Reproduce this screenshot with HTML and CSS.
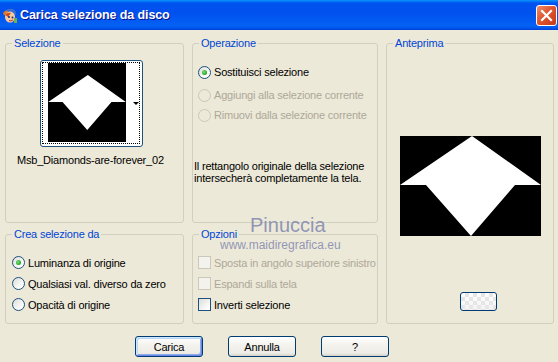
FILE: index.html
```html
<!DOCTYPE html>
<html lang="it">
<head>
    <meta charset="UTF-8">
    <title>Carica selezione da disco</title>
    <link rel="stylesheet" href="styles.css">
</head>
<body>
    <div class="window">
        <div class="titlebar">
            <svg class="app-icon" width="16" height="16" viewBox="0 0 16 16">
                <path d="M3 3 Q6 0 11 1 Q15 3 14 7 L12 6 Q10 3 6 4 Z" fill="#3a6fd0"/>
                <path d="M1 6 Q2 2 6 3 L4 8 Z" fill="#e07a1e"/>
                <ellipse cx="8" cy="9" rx="5" ry="5.5" fill="#f6c9a0"/>
                <path d="M3 7 Q5 4 9 5 L6 9 Z" fill="#d24c1a"/>
                <circle cx="7" cy="9" r="1" fill="#1b2a6b"/>
                <circle cx="10.5" cy="9.5" r="1" fill="#1b2a6b"/>
                <path d="M7 12.5 Q9 13.5 11 12" stroke="#b33" stroke-width="1" fill="none"/>
                <rect x="12" y="10" width="3" height="5" fill="#6ab04c"/>
            </svg>
            <span class="title">Carica selezione da disco</span>
            <button class="close">
                <svg width="13" height="13" viewBox="0 0 13 13">
                    <path d="M2 2 L11 11 M11 2 L2 11" stroke="#fff" stroke-width="2.2" stroke-linecap="square"/>
                </svg>
            </button>
        </div>

        <div class="dialog">
            <div class="groups">
                <fieldset class="group sel">
                    <legend>Selezione</legend>
                    <div class="thumb">
                        <div class="thumb-focus">
                            <div class="thumb-img">
                                <svg width="78" height="55" viewBox="0 0 141 100">
                                    <polygon points="72,0 141,49 115,49 71,100 26,49 0,49" fill="#fff"/>
                                </svg>
                            </div>
                            <span class="thumb-arrow"></span>
                        </div>
                    </div>
                    <div class="sel-name">Msb_Diamonds-are-forever_02</div>
                </fieldset>

                <fieldset class="group op">
                    <legend>Operazione</legend>
                    <div class="row first"><span class="radio checked"></span><span class="label">Sostituisci selezione</span></div>
                    <div class="row disabled"><span class="radio"></span><span class="label">Aggiungi alla selezione corrente</span></div>
                    <div class="row disabled"><span class="radio"></span><span class="label">Rimuovi dalla selezione corrente</span></div>
                    <p class="note">Il rettangolo originale della selezione intersecherà completamente la tela.</p>
                </fieldset>

                <fieldset class="group preview">
                    <legend>Anteprima</legend>
                    <div class="preview-img">
                        <svg width="141" height="100" viewBox="0 0 141 100">
                            <polygon points="72,0 141,49 115,49 71,100 26,49 0,49" fill="#fff"/>
                        </svg>
                    </div>
                    <button class="bg-btn"></button>
                </fieldset>

                <fieldset class="group crea">
                    <legend>Crea selezione da</legend>
                    <div class="list">
                        <div class="row"><span class="radio checked"></span><span class="label">Luminanza di origine</span></div>
                        <div class="row"><span class="radio"></span><span class="label">Qualsiasi val. diverso da zero</span></div>
                        <div class="row"><span class="radio"></span><span class="label">Opacità di origine</span></div>
                    </div>
                </fieldset>

                <fieldset class="group opt">
                    <legend>Opzioni</legend>
                    <div class="list">
                        <div class="row disabled"><span class="check"></span><span class="label">Sposta in angolo superiore sinistro</span></div>
                        <div class="row disabled"><span class="check"></span><span class="label">Espandi sulla tela</span></div>
                        <div class="row"><span class="check"></span><span class="label">Inverti selezione</span></div>
                    </div>
                </fieldset>
            </div>

            <div class="buttons">
                <button class="btn default">Carica</button>
                <button class="btn">Annulla</button>
                <button class="btn">?</button>
            </div>

            <div class="watermark">
                <div class="wm-name">Pinuccia</div>
                <div class="wm-site">www.maidiregrafica.eu</div>
            </div>
        </div>
    </div>
</body>
</html>
```

FILE: styles.css
```css
body {
    margin: 0;
    padding: 0;
    background-color: #ece9d8;
    font-family: "Liberation Sans", Arial, sans-serif;
    font-size: 11px;
    letter-spacing: -0.2px;
    color: #000;
}
.window {
    width: 558px;
    height: 362px;
    overflow: hidden;
}
.titlebar {
    height: 30px;
    display: flex;
    align-items: center;
    padding: 0 1px 0 2px;
    background: linear-gradient(to bottom, #0997ff 0, #0053ee 10%, #0050ee 40%, #0561f4 85%, #0058ee 93%, #003dd7 100%);
}
.app-icon {
    margin-top: 1px;
}
.title {
    margin-left: 2px;
    color: #fff;
    font-weight: bold;
    font-size: 12.5px;
    letter-spacing: -0.1px;
    text-shadow: 1px 1px #0f1089;
}
.close {
    margin-left: auto;
    width: 21px;
    height: 21px;
    padding: 0;
    border: 1px solid #fff;
    border-radius: 3px;
    background: linear-gradient(135deg, #ef8e70 0, #e0552f 45%, #c23b17 100%);
    display: flex;
    align-items: center;
    justify-content: center;
}
.dialog {
    position: relative;
    padding: 6px 4px 0 5px;
}
.groups {
    display: grid;
    grid-template-columns: 179px 186px 168px;
    grid-template-rows: 187px 97px;
    gap: 4px 8px;
}
.group {
    margin: 0;
    padding: 0;
    min-width: 0;
    border: 1px solid #d0d0bf;
    border-radius: 3px;
}
.group legend {
    margin-left: 6px;
    padding: 0 2px;
    line-height: 14px;
    color: #0046d5;
}
.sel { grid-column: 1; grid-row: 1; }
.op { grid-column: 2; grid-row: 1; }
.preview { grid-column: 3; grid-row: 1 / span 2; }
.crea { grid-column: 1; grid-row: 2; }
.opt { grid-column: 2; grid-row: 2; }

/* selezione */
.thumb {
    margin: 10px 0 0 34px;
    width: 103px;
    height: 87px;
    box-sizing: border-box;
    border: 1px solid #1c5180;
    border-radius: 3px;
    background: #fff;
}
.thumb-focus {
    margin: 1px;
    width: 98px;
    height: 82px;
    box-sizing: border-box;
    border: 1px dotted #000;
    display: flex;
    align-items: flex-start;
}
.thumb-img {
    margin-left: 5px;
    width: 78px;
    height: 79px;
    background: #000;
    display: flex;
    align-items: center;
}
.thumb-img svg {
    display: block;
}
.thumb-arrow {
    align-self: center;
    margin-left: 7px;
    width: 0;
    height: 0;
    border-left: 3px solid transparent;
    border-right: 3px solid transparent;
    border-top: 3px solid #000;
}
.sel-name {
    margin: 6px 0 0 11px;
    line-height: 14px;
}

/* righe radio / check */
.row {
    display: flex;
    align-items: center;
    height: 20px;
}
.op .row {
    padding-left: 5px;
}
.op .row.first {
    margin-top: 12px;
    margin-bottom: 3px;
}
.list {
    margin-top: 11px;
}
.list .row {
    height: 21px;
}
.crea .row {
    padding-left: 6px;
}
.opt .row {
    padding-left: 5px;
}
.label {
    margin-left: 3px;
}
.row.disabled .label {
    color: #aca899;
}
.radio {
    position: relative;
    width: 13px;
    height: 13px;
    box-sizing: border-box;
    border: 1px solid #1c5180;
    border-radius: 50%;
    background: linear-gradient(135deg, #dcdcd7 0, #fff 80%);
    flex: none;
}
.radio.checked::after {
    content: "";
    position: absolute;
    left: 3px;
    top: 3px;
    width: 5px;
    height: 5px;
    border-radius: 50%;
    background: radial-gradient(circle at 40% 40%, #7ee07a 0, #21a121 70%);
}
.row.disabled .radio {
    border-color: #cac8bb;
    background: #ece9d8;
}
.check {
    width: 13px;
    height: 13px;
    box-sizing: border-box;
    border: 1px solid #1c5180;
    background: linear-gradient(135deg, #dcdcd7 0, #fff 85%);
    flex: none;
}
.row.disabled .check {
    border-color: #cac8bb;
    background: #f3f2ec;
}
.note {
    margin: 35px 0 0 1px;
    line-height: 12px;
}

/* anteprima */
.preview-img {
    margin: 86px 0 0 13px;
    width: 141px;
    height: 100px;
    background: #000;
}
.preview-img svg {
    display: block;
}
.bg-btn {
    display: block;
    margin: 56px 0 0 73px;
    width: 37px;
    height: 19px;
    padding: 0;
    border: 1px solid #003c74;
    border-radius: 3px;
    background:
        linear-gradient(45deg, #e6e6e6 25%, transparent 25%, transparent 75%, #e6e6e6 75%),
        linear-gradient(45deg, #e6e6e6 25%, transparent 25%, transparent 75%, #e6e6e6 75%),
        linear-gradient(#fff, #f2f2f2);
    background-size: 8px 8px, 8px 8px, 100% 100%;
    background-position: 0 0, 4px 4px, 0 0;
}

/* pulsanti */
.buttons {
    display: flex;
    gap: 25px;
    margin: 12px 0 0 130px;
}
.btn {
    width: 68px;
    height: 21px;
    padding: 0;
    border: 1px solid #003c74;
    border-radius: 3px;
    background: linear-gradient(to bottom, #fff 0, #f4f3ee 40%, #ecebe6 85%, #d6d0c5 100%);
    font-family: "Liberation Sans", Arial, sans-serif;
    font-size: 11px;
    letter-spacing: -0.2px;
    color: #000;
}
.btn.default {
    box-shadow: inset 1px 1px #cee7ff, inset -1px -1px #6982ee, inset 2px 2px #bcd4f6, inset -2px -2px #89ade4;
}

/* filigrana */
.watermark {
    position: absolute;
    left: 0;
    top: 0;
    pointer-events: none;
}
.wm-name {
    position: absolute;
    left: 250px;
    top: 185px;
    font-size: 20px;
    line-height: 20px;
    letter-spacing: 0;
    color: rgba(128, 134, 175, 0.85);
    white-space: nowrap;
}
.wm-site {
    position: absolute;
    left: 220px;
    top: 211px;
    font-size: 12px;
    line-height: 8px;
    letter-spacing: 0;
    color: rgba(128, 134, 175, 0.85);
    white-space: nowrap;
}
```
